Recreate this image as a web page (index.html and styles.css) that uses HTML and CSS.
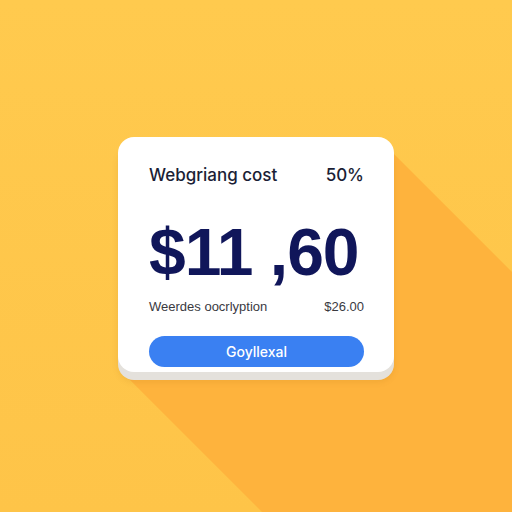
FILE: index.html
```html
<!DOCTYPE html>
<html lang="en">
<head>
<meta name="viewport" content="width=device-width, initial-scale=1">
<title>Cost Card</title>
  <link rel="stylesheet" href="styles.css">
</head>
<body>

<div class="stage">
  <div class="long-shadow"></div>

  <div class="card">
    <div class="row head">
      <span>Webgriang cost</span>
      <span>50%</span>
    </div>
    <div class="amount">$11 ,60</div>
    <div class="row detail">
      <span>Weerdes oocrlyption</span>
      <span>$26.00</span>
    </div>
    <button class="cta">Goyllexal</button>
  </div>
</div>

</body>
</html>
```

FILE: styles.css
```css
body {
  margin: 0;
  font-family: 'Liberation Sans', Arial, sans-serif;
}
.stage {
  position: relative;
  width: 512px;
  height: 512px;
  overflow: hidden;
  background: linear-gradient(to bottom, #ffca4e, #fec448);
  padding-top: 137px;
  box-sizing: border-box;
}
/* flat 45deg shadow falling off the card */
.long-shadow {
  position: absolute;
  inset: 0;
  background: #feb33d;
  clip-path: polygon(380px 140px, 512px 272px, 512px 512px, 262px 512px, 124px 374px);
}
.card {
  position: relative;
  width: 276px;
  margin: 0 auto;
  background: #fff;
  border-radius: 16px;
  padding: 28px 30px 5px 31px;
  box-sizing: border-box;
  box-shadow: 0 8px 0 #e4e1dc, 0 10px 6px rgba(150, 90, 0, 0.12);
}
.row {
  display: flex;
  justify-content: space-between;
  align-items: center;
}
.head {
  font-family: Inter, 'Liberation Sans', sans-serif;
  font-weight: 500;
  font-size: 17px;
  color: #1b1e36;
  height: 20px;
}
.amount {
  margin-top: 34px;
  font-size: 66px;
  font-weight: bold;
  color: #10165a;
  letter-spacing: -1px;
  line-height: 66px;
}
.detail {
  margin-top: 14px;
  font-size: 13px;
  color: #3a3a3f;
}
.cta {
  display: block;
  width: 100%;
  height: 31px;
  margin-top: 22px;
  border: none;
  border-radius: 16px;
  background: #3a80f2;
  color: #fff;
  font-family: Inter, 'Liberation Sans', sans-serif;
  font-weight: 500;
  font-size: 14px;
  cursor: pointer;
}
```
